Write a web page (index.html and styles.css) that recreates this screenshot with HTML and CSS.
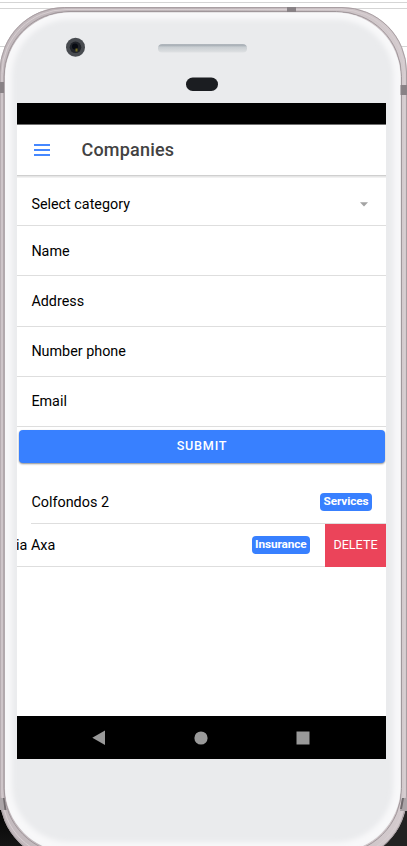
FILE: index.html
```html
<!DOCTYPE html>
<html lang="en">
<head>
<meta charset="utf-8">
<title>Companies</title>
<link rel="stylesheet" href="styles.css">
</head>
<body>
<div class="device">
  <svg class="shell" viewBox="0 0 407 846" width="407" height="846" aria-hidden="true">
    <defs>
      <linearGradient id="rim" x1="0" x2="1" y1="0" y2="0">
        <stop offset="0" stop-color="#c4bbbf"/><stop offset=".5" stop-color="#bdb4b7"/><stop offset="1" stop-color="#d4cbce"/>
      </linearGradient>
      <linearGradient id="slot" x1="0" x2="0" y1="0" y2="1">
        <stop offset="0" stop-color="#98a0a8"/><stop offset=".35" stop-color="#c9ced2"/><stop offset="1" stop-color="#dfe1e3"/>
      </linearGradient>
      <linearGradient id="corner" x1="0" x2="0" y1="0" y2="1">
        <stop offset="0" stop-color="#000"/><stop offset="1" stop-color="#151515"/>
      </linearGradient>
      <filter id="soft" x="-5%" y="-5%" width="110%" height="110%"><feGaussianBlur stdDeviation="2.500"/></filter>
      <clipPath id="faceClip"><rect x="5" y="12.500" width="395.500" height="839.500" rx="65"/></clipPath>
    </defs>
    <path d="M0 2.500H407M0 8.500H407M0 46.500H407" stroke="#d5d5d5"/>
    <rect x="0" y="800" width="100" height="46" fill="url(#corner)"/>
    <rect x="307" y="800" width="100" height="46" fill="#222"/>
    <rect x="-.5" y="7" width="407.500" height="854" rx="65" fill="url(#rim)"/>
    <rect x="0" y="7.500" width="406.500" height="853" rx="64.500" fill="none" stroke="#a99fa3"/>
    <rect x="2" y="9.500" width="402.500" height="848" rx="64" fill="none" stroke="#d8cfd2"/>
    <rect x="4" y="11.500" width="397.500" height="842" rx="65" fill="none" stroke="#a0979b"/>
    <rect x="5" y="12.500" width="395.500" height="839.500" rx="65" fill="#eaebed"/>
    <g clip-path="url(#faceClip)"><rect x="6" y="13.500" width="393.500" height="834.500" rx="64" fill="none" stroke="#f8f8f9" stroke-width="12" filter="url(#soft)"/></g>
    <rect x="0" y="82" width="4" height="11" fill="#898286"/>
    <rect x="400.500" y="85" width="6.500" height="10" fill="#898286"/>
    <rect x="287" y="7" width="9" height="5" fill="#898286"/>
    <path d="M0 798h4l2 12H0z" fill="#aaa4a7"/><path d="M3 798h1.500l2 12h-2z" fill="#706a6d"/>
    <path d="M402 798h5v13h-7z" fill="#aaa4a7"/><path d="M402 798h2l-2 11h-2z" fill="#706a6d"/>
    <circle cx="75.500" cy="47.300" r="9.500" fill="#484b50"/>
    <circle cx="75.500" cy="47.300" r="5.800" fill="#202329"/>
    <circle cx="75" cy="46.500" r="3" fill="#080b12"/>
    <rect x="75.500" y="48.500" width="2" height="3" fill="#776e20"/>
    <rect x="158" y="44.300" width="89" height="8.200" rx="4" fill="url(#slot)"/>
    <rect x="186" y="77.500" width="32" height="13.500" rx="6.700" fill="#1b1d21"/>
  </svg>

  <main class="screen">
    <div class="statusbar"></div>
    <header class="toolbar">
      <svg class="menu" viewBox="0 0 16 12" width="16" height="12"><path d="M0 1H16M0 6H16M0 11H16" stroke="#4688ff" stroke-width="1.800"/></svg>
      <h1 class="title">Companies</h1>
    </header>
    <form class="form">
      <div class="field select">
        <span>Select category</span>
        <svg viewBox="0 0 8 5" width="8" height="5"><path d="M0 .3H8L4 4.500z" fill="#a3a3a3"/></svg>
      </div>
      <div class="field">Name</div>
      <div class="field">Address</div>
      <div class="field">Number phone</div>
      <div class="field">Email</div>
      <button class="submit" type="button">SUBMIT</button>
    </form>
    <section class="list">
      <div class="row">
        <div class="row-inner"><span class="name">Colfondos 2</span><span class="badge">Services</span></div>
      </div>
      <div class="row slid">
        <div class="row-inner"><span class="name clipped">ia Axa</span><span class="badge">Insurance</span></div>
        <button class="delete" type="button">DELETE</button>
      </div>
    </section>
    <nav class="navbar">
      <svg viewBox="0 0 14 16" width="14" height="16"><path d="M13 .5V15L.3 7.700z" fill="#999"/></svg>
      <svg viewBox="0 0 14 14" width="14" height="14"><circle cx="7" cy="7" r="6.600" fill="#999"/></svg>
      <svg viewBox="0 0 14 14" width="14" height="14"><path d="M.5.500H13.500V13.500H.5z" fill="#999"/></svg>
    </nav>
  </main>
</div>
</body>
</html>
```
FILE: styles.css
```css
* { box-sizing: border-box; }

body {
  margin: 0;
  background: #fff;
  font-family: Roboto, "Liberation Sans", sans-serif;
  color: #000;
}

.device {
  position: relative;
  width: 407px;
  height: 846px;
  padding: 103px 21px 87px 17px;
  overflow: hidden;
}

.shell {
  position: absolute;
  inset: 0;
}

.screen {
  position: relative;
  display: flex;
  flex-direction: column;
  height: 656px;
  background: #fff;
  overflow: hidden;
}

.statusbar {
  flex: none;
  height: 22px;
  background: #000;
  border-bottom: 1px solid #707070;
}

.toolbar {
  flex: none;
  display: flex;
  align-items: center;
  gap: 31.5px;
  height: 50px;
  padding-left: 17px;
  box-shadow: 0 1px 0 #cfcfcf, 0 2px 0 #e6e6e6, 0 3px 0 #f1f1f1;
}

.menu { margin-top: -1px; }

.title {
  margin: 0;
  font-size: 18px;
  line-height: 24px;
  font-weight: 500;
  letter-spacing: .2px;
  color: #424242;
}

.form { padding-top: 1px; }

.field {
  display: flex;
  align-items: center;
  height: 50.2px;
  padding: 1px 14px 0 14.4px;
  border-bottom: 1px solid #dedede;
  font-size: 14.35px;
}

.select {
  justify-content: space-between;
  padding: 7px 18px 0 14.4px;
}

.submit {
  display: block;
  width: 366px;
  height: 33px;
  margin: 3px 0 0 2px;
  padding: 0 0 2px;
  border: 0;
  border-radius: 4px;
  background: #3880ff;
  box-shadow: 0 1px 2px rgba(0, 0, 0, .45);
  color: #fff;
  font: 500 12.6px Roboto, sans-serif;
  letter-spacing: .8px;
}

.list {
  margin-top: 18px;
  font-size: 14.4px;
}

.row { padding-left: 14px; }

.row-inner {
  display: flex;
  flex: 1;
  align-items: center;
  justify-content: space-between;
  height: 43px;
  padding-right: 14px;
  border-bottom: 1px solid #dedede;
}

.slid {
  display: flex;
  padding-left: 0;
}

.slid .row-inner {
  padding-right: 15px;
  border-right: 1px solid #dedede;
  margin-right: -1px;
}

.name { padding: 2px 0 0 .4px; }

.clipped { margin-left: -1.4px; }

.badge {
  height: 18px;
  padding: 0 3.5px;
  border-radius: 4px;
  background: #3880ff;
  color: #fff;
  font-size: 11.8px;
  line-height: 17px;
  font-weight: 700;
  letter-spacing: -.1px;
}

.delete {
  position: relative;
  width: 61px;
  height: 43px;
  padding: 0 0 1px;
  border: 0;
  background: #eb445a;
  color: #fff;
  font: 400 12.6px Roboto, sans-serif;
}

.navbar {
  flex: none;
  display: flex;
  align-items: center;
  justify-content: space-between;
  height: 43px;
  margin-top: auto;
  padding: 0 76px 0 75px;
  background: #000;
}
```
